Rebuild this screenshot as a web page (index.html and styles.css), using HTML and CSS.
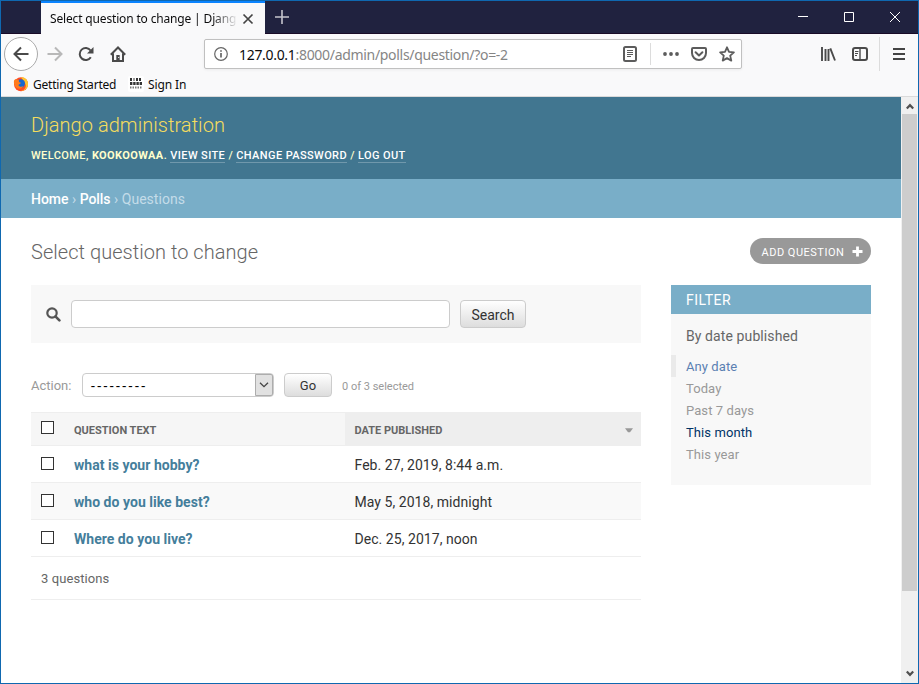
FILE: index.html
```html
<!DOCTYPE html>
<html lang="en">
<head>
<meta charset="utf-8">
<title>Select question to change | Django site admin</title>
<link rel="stylesheet" href="styles.css">
</head>
<body>
<div class="window">
  <div class="titlebar">
    <div class="tab"><span class="tab-title">Select question to change | Djang</span>
      <svg class="tab-close" width="12" height="12" viewBox="0 0 12 12"><path d="M1.5 1.5l9 9M10.5 1.5l-9 9" stroke="#444" stroke-width="1.7"/></svg>
    </div>
    <svg class="new-tab" width="14" height="14" viewBox="0 0 14 14"><path d="M7 0v14M0 7h14" stroke="#c5c5cd" stroke-width="1.6"/></svg>
    <div class="controls">
      <svg width="12" height="12" viewBox="0 0 12 12"><path d="M1 5.5h10" stroke="#fff"/></svg>
      <svg width="12" height="12" viewBox="0 0 12 12"><path d="M1.500 1.500h9v9h-9z" fill="none" stroke="#fff"/></svg>
      <svg width="12" height="12" viewBox="0 0 12 12"><path d="M1 1l10 10M11 1L1 11" stroke="#fff"/></svg>
    </div>
  </div>
  <div class="navbar">
    <div class="back"><svg width="16" height="16" viewBox="0 0 16 16"><path d="M15.500 8H1.500M8 1.500L1.500 8L8 14.500" fill="none" stroke="#4a4a4a" stroke-width="2"/></svg></div>
    <svg class="forward" width="16" height="16" viewBox="0 0 16 16"><path d="M.5 8h14M8 1.500L14.500 8L8 14.500" fill="none" stroke="#b8b8b8" stroke-width="2"/></svg>
    <svg class="reload" width="16" height="16" viewBox="0 0 16 16"><path d="M12.800 11.200A6 6 0 1 1 12.600 4.500" fill="none" stroke="#4a4a4a" stroke-width="2"/><path d="M15.500 1v6.500H9z" fill="#4a4a4a"/></svg>
    <svg class="home" width="16" height="16" viewBox="0 0 16 16"><path d="M.8 8.700L8 1.500l7.200 7.200M3 7.500V15h10V7.500" fill="none" stroke="#4a4a4a" stroke-width="2"/><path d="M6.300 9h3.400v6H6.300z" fill="#4a4a4a"/><path d="M8.200 11.500h1" stroke="#fff"/></svg>
    <div class="urlbar">
      <svg width="14" height="14" viewBox="0 0 14 14"><circle cx="7" cy="7" r="6.300" fill="none" stroke="#666" stroke-width="1.200"/><path d="M7 6v4.500M7 3.300v1.500" stroke="#666" stroke-width="1.700"/></svg>
      <span class="url"><b>127.0.0.1</b>:8000/admin/polls/question/?o=-2</span>
      <svg class="reader" width="14" height="16" viewBox="0 0 14 16"><rect x="1" y="1" width="12" height="14" rx="1.500" fill="none" stroke="#5c5c5c" stroke-width="2"/><path d="M4 4.500h6M4 6.500h6M4 8.500h6M4 10.500h4" stroke="#5c5c5c"/></svg>
      <i class="url-divider"></i>
      <svg class="dots" width="16" height="16" viewBox="0 0 16 16" fill="#5c5c5c"><circle cx="2" cy="8" r="1.900"/><circle cx="8" cy="8" r="1.900"/><circle cx="14" cy="8" r="1.900"/></svg>
      <svg class="pocket" width="16" height="16" viewBox="0 0 16 16" fill="none" stroke="#5c5c5c" stroke-width="2"><path d="M2 2h12a1 1 0 0 1 1 1v4a7 7 0 0 1-14 0V3a1 1 0 0 1 1-1z"/><path d="M4.600 6.300L8 9.500l3.400-3.200" stroke-linecap="round" stroke-linejoin="round"/></svg>
      <svg class="star" width="16" height="16" viewBox="0 0 16 16"><path d="M8 1.300l2 4.500 4.900.5-3.700 3.300 1.100 5L8 12.100l-4.300 2.500 1.100-5L1.100 6.300 6 5.800z" fill="none" stroke="#5c5c5c" stroke-width="1.800" stroke-linejoin="round"/></svg>
    </div>
    <svg class="library" width="16" height="16" viewBox="0 0 16 16"><path d="M2 1v14M5.500 3v12M8.500 3v12M10.300 2.300L15 14.500" stroke="#4a4a4a" stroke-width="1.900"/></svg>
    <svg class="sidebar-icon" width="16" height="14" viewBox="0 0 16 14"><rect x="1" y="1" width="14" height="12" rx="2" fill="none" stroke="#4a4a4a" stroke-width="2"/><path d="M8 1v12" stroke="#4a4a4a" stroke-width="1.400"/><path d="M3 4.500h3.500M3 6.500h3M3 8.500h2" stroke="#4a4a4a"/></svg>
    <i class="nav-divider"></i>
    <svg class="menu" width="12" height="12" viewBox="0 0 12 12"><path d="M0 1h12M0 6h12M0 11h12" stroke="#444" stroke-width="2"/></svg>
  </div>
  <div class="bookmarks">
    <svg width="16" height="16" viewBox="0 0 16 16"><circle cx="8" cy="8.200" r="7" fill="#ff4b24"/><path d="M8 1c5 0 7.500 4 7 8-.5 3.500-3.500 6-7 6 4-1 6-4 4-8-1-2.500-3-3.500-4-6z" fill="#ffc42e"/><circle cx="7.800" cy="7.500" r="4.200" fill="#1767cf"/><path d="M1 4.500C2 3 3 3 4 3.500l2 .8c-.5 1.500.3 2.200 2 2.400-.5 1.500-2 1.400-2.600 2.200.6 2 3 2.200 5 1.200-1.500 3.500-7 3.400-8.500-.4C1 8 .7 6.500 1 4.500z" fill="#ff7a1c"/></svg>
    <span class="bm-start">Getting Started</span>
    <svg class="bm-icon" width="16" height="16" viewBox="0 0 16 16"><rect width="16" height="16" rx="2" fill="#fff"/><g stroke="#333" fill="none"><path d="M2 3.500h12" stroke-width="3" stroke-dasharray="2 1.500 1 1.500 2 1"/><path d="M2 7.500h12" stroke-width="3" stroke-dasharray="2.400 .8"/><path d="M2 11.500h12" stroke-width="2" stroke-dasharray="1.500 1" stroke="#777"/></g></svg>
    <span class="bm-sign">Sign In</span>
  </div>
  <div class="viewport">
    <div class="page">
      <header class="header">
        <h1>Django administration</h1>
        <div class="user-tools">WELCOME, <strong>KOOKOOWAA</strong>. <a>VIEW SITE</a> / <a>CHANGE PASSWORD</a> / <a>LOG OUT</a></div>
      </header>
      <nav class="breadcrumbs"><a>Home</a> › <a>Polls</a> › Questions</nav>
      <main class="content">
        <div class="heading"><h2>Select question to change</h2>
          <a class="add"><span>ADD QUESTION</span><svg width="11" height="11" viewBox="0 0 11 11"><path d="M5.500.5v10M.5 5.500h10" stroke="#fff" stroke-width="2.800"/></svg></a></div>
        <div class="columns">
          <section class="changelist">
            <div class="search">
              <svg width="15" height="15" viewBox="0 0 15 15"><circle cx="6" cy="6" r="4.700" fill="none" stroke="#555" stroke-width="2.200"/><path d="M9.400 9.400l4 4" stroke="#555" stroke-width="2.600" stroke-linecap="round"/></svg>
              <div class="search-input"></div><div class="button search-button">Search</div>
            </div>
            <div class="actions">
              <span class="action-label">Action:</span>
              <div class="select"><span>---------</span><i><svg width="10" height="6" viewBox="0 0 10 6"><path d="M1 .7l4 4 4-4" fill="none" stroke="#444" stroke-width="1.300"/></svg></i></div>
              <div class="button go">Go</div><span class="counter">0 of 3 selected</span>
            </div>
            <div class="results">
              <div class="row head"><div class="check"><i></i></div><div class="question"><span class="th-question">QUESTION TEXT</span></div><div class="date"><span class="th-date">DATE PUBLISHED</span><svg width="8" height="5" viewBox="0 0 8 5"><path d="M0 .3h8L5 4.300H3z" fill="#999"/></svg></div></div>
              <div class="row"><div class="check"><i></i></div><div class="question"><a>what is your hobby?</a></div><div class="date">Feb. 27, 2019, 8:44 a.m.</div></div>
              <div class="row alt"><div class="check"><i></i></div><div class="question"><a>who do you like best?</a></div><div class="date">May 5, 2018, midnight</div></div>
              <div class="row"><div class="check"><i></i></div><div class="question"><a>Where do you live?</a></div><div class="date">Dec. 25, 2017, noon</div></div>
            </div>
            <div class="paginator">3 questions</div>
          </section>
          <aside class="filter">
            <h3>FILTER</h3><h4>By date published</h4>
            <ul><li class="selected">Any date</li><li>Today</li><li>Past 7 days</li><li class="hovered">This month</li><li>This year</li></ul>
          </aside>
        </div>
      </main>
    </div>
    <div class="scrollbar">
      <svg width="8" height="7" viewBox="0 0 8 7"><path d="M.8 5.500L4 2.200l3.200 3.300" fill="none" stroke="#505050" stroke-width="2.200"/></svg>
      <div class="thumb"></div>
      <svg class="down" width="8" height="7" viewBox="0 0 8 7"><path d="M.8 1.500L4 4.800l3.200-3.300" fill="none" stroke="#505050" stroke-width="2.200"/></svg>
    </div>
  </div>
</div>
</body>
</html>
```
FILE: styles.css
```css
* { box-sizing: border-box; }
body { margin: 0; font-family: Roboto, sans-serif; color: #333; background: #fff; }
h1, h2, h3, h4, ul { margin: 0; padding: 0; font-weight: 400; list-style: none; }
svg { display: block; flex: none; }
.window { width: 919px; height: 684px; border: 1px solid #0f68b0; display: flex; flex-direction: column; overflow: hidden; }
.titlebar, .navbar, .bookmarks { font-family: "Noto Sans", "Open Sans", sans-serif; color: #0c0c0d; flex: none; }

.titlebar { height: 33px; background: #20223f; border-bottom: 1px solid #190b27; display: flex; padding-left: 40px; }
.tab { width: 224px; height: 33px; background: #f9f9fa; border-top: 2px solid #0a84ff; display: flex; align-items: center; padding: 0 11px 0 9px; justify-content: space-between; }
.tab-title { width: 188px; white-space: nowrap; font-size: 12px; letter-spacing: -.16px; -webkit-mask-image: linear-gradient(90deg, #000 162px, transparent 188px); mask-image: linear-gradient(90deg, #000 162px, transparent 188px); }
.new-tab { margin: 9px 0 0 10px; }
.controls { margin: 10px 17px 0 auto; display: flex; gap: 34px; }

.navbar { height: 40px; background: #f9f9fa; display: flex; align-items: center; padding: 0 0 0 3px; }
.back { width: 34px; height: 34px; border: 1px solid #aaa; border-radius: 50%; background: #fff; display: flex; align-items: center; justify-content: center; flex: none; }
.forward { margin-left: 9px; }
.reload { margin-left: 15px; }
.home { margin-left: 16px; }
.urlbar { width: 538px; height: 30px; margin-left: 78px; padding-left: 9px; background: #fff; border: 1px solid #c0c0c0; border-radius: 2px; box-shadow: 0 1px 3px rgba(0,0,0,.06); display: flex; align-items: center; flex: none; }
.url { margin-left: 11px; width: 384px; color: #858585; font-size: 14px; letter-spacing: -.31px; white-space: nowrap; }
.url b { color: #0c0c0d; font-weight: 400; }
.url-divider { width: 1px; height: 22px; background: #dcdcdc; margin-left: 13px; }
.dots { margin-left: 12px; }
.pocket { margin-left: 12px; }
.star { margin-left: 12px; }
.library { margin-left: 78px; }
.sidebar-icon { margin-left: 16px; }
.nav-divider { width: 1px; height: 34px; background: #dcdcdc; margin-left: 11px; }
.menu { margin-left: 13px; }
.bookmarks { height: 23px; background: #f9f9fa; border-bottom: 1px solid #dadada; display: flex; align-items: center; padding: 0 0 2px 12px; font-size: 12px; letter-spacing: -.2px; white-space: nowrap; }
.bm-start { margin-left: 4px; width: 84px; }
.bm-icon { margin-left: 11px; }
.bm-sign { margin-left: 4px; letter-spacing: -.1px; }

.viewport { flex: 1; display: flex; min-height: 0; }
.page { width: 900px; background: #fff; }
.header { height: 82px; background: #417690; padding: 15px 30px 0; }
.header h1 { color: #f5dd5d; font-size: 20px; font-weight: 300; line-height: 26px; letter-spacing: .05px; }
.user-tools { margin-top: 10px; color: #ffc; font-size: 11px; font-weight: 500; line-height: 16px; letter-spacing: .4px; white-space: nowrap; }
.user-tools a { color: #fff; border-bottom: 1px solid rgba(255,255,255,.25); }
.breadcrumbs { height: 39px; background: #79aec8; color: #c4dce8; font-size: 14px; line-height: 40px; letter-spacing: .03px; padding-left: 30px; }
.breadcrumbs a { color: #fff; font-weight: 500; letter-spacing: -.05px; }
.content { padding: 20px 30px 0; }
.heading { height: 47px; display: flex; justify-content: space-between; align-items: flex-start; }
.heading h2 { color: #666; font-size: 20px; font-weight: 300; line-height: 28px; letter-spacing: .04px; }
.add { width: 121px; height: 26px; border-radius: 13px; background: #999; color: #fff; font-size: 11px; letter-spacing: .5px; display: flex; align-items: center; justify-content: space-between; padding: 0 8px 0 11.5px; }
.add span { padding-top: 2px; }
.columns { display: flex; gap: 30px; align-items: flex-start; }
.changelist { width: 610px; }
.search { height: 58px; background: #f8f8f8; display: flex; align-items: center; padding-left: 15px; }
.search-input { width: 379px; height: 28px; margin-left: 10px; border: 1px solid #ccc; border-radius: 4px; background: #fff; }
.button { border: 1px solid #ccc; border-radius: 4px; background: linear-gradient(#fff, #ddd); display: flex; align-items: center; justify-content: center; }
.search-button { width: 66px; height: 28px; margin-left: 10px; font-size: 14px; padding-top: 2px; }
.actions { height: 69px; padding: 30px 0 15px; display: flex; align-items: center; color: #999; white-space: nowrap; }
.action-label { width: 51px; font-size: 13px; }
.select { width: 192px; height: 24px; border: 1px solid #ccc; border-radius: 4px; background: #fff; display: flex; align-items: center; justify-content: space-between; padding-left: 8px; color: #000; font-size: 14px; }
.select span { letter-spacing: 2.4px; padding-top: 1px; }
.select i { width: 18px; height: 22px; border: 1px solid #adadad; border-radius: 0 2px 2px 0; background: #e1e1e1; display: flex; align-items: center; justify-content: center; }
.go { width: 48px; height: 24px; margin-left: 10px; color: #333; font-size: 13px; padding-top: 1px; }
.counter { margin-left: 10px; font-size: 11px; padding-top: 2px; }
.row { height: 37px; border-bottom: 1px solid #eee; display: grid; grid-template-columns: 33px 281px 296px; font-size: 14px; }
.row > div { display: flex; align-items: center; padding: 1px 10px 0; }
.row a { color: #447e9b; font-weight: 700; letter-spacing: .03px; }
.row.alt { background: #f9f9f9; }
.row .check { padding: 11px 10px 0; align-items: flex-start; }
.check i { width: 13px; height: 13px; border: 1px solid #333; background: #fff; }
.row.head { height: 34px; background: #f6f6f6; border-top: 1px solid #eee; font-size: 11px; font-weight: 700; color: #666; }
.row.head .check { padding-top: 8px; }
.row .date { padding-left: 9.5px; letter-spacing: .05px; }
.row.head .date { background: #eee; justify-content: space-between; padding: 3px 8px 0 9.5px; letter-spacing: 0; }
.row.head .question { padding-top: 3px; }
.paginator { height: 43px; line-height: 43px; padding-left: 10px; border-bottom: 1px solid #eee; color: #666; font-size: 13px; letter-spacing: .08px; }
.filter { width: 200px; height: 200px; background: #f8f8f8; }
.filter h3 { height: 29px; line-height: 30px; padding-left: 15px; background: #79aec8; color: #fff; font-size: 14px; letter-spacing: .5px; }
.filter h4 { padding: 12px 15px 0; font-size: 14px; line-height: 20px; letter-spacing: .1px; color: #666; }
.filter ul { margin-top: 9px; }
.filter li { height: 22px; line-height: 23px; padding-left: 15px; font-size: 13px; letter-spacing: .08px; color: #999; }
.filter .selected { color: #5b80b2; border-left: 5px solid #eaeaea; padding-left: 10px; }
.filter .hovered { color: #036; }
.scrollbar { width: 17px; background: #f0f0f0; display: flex; flex-direction: column; align-items: center; padding: 6px 0; }
.thumb { width: 15px; height: 477px; background: #cdcdcd; margin-top: 4px; }
.down { margin-top: auto; }
```
